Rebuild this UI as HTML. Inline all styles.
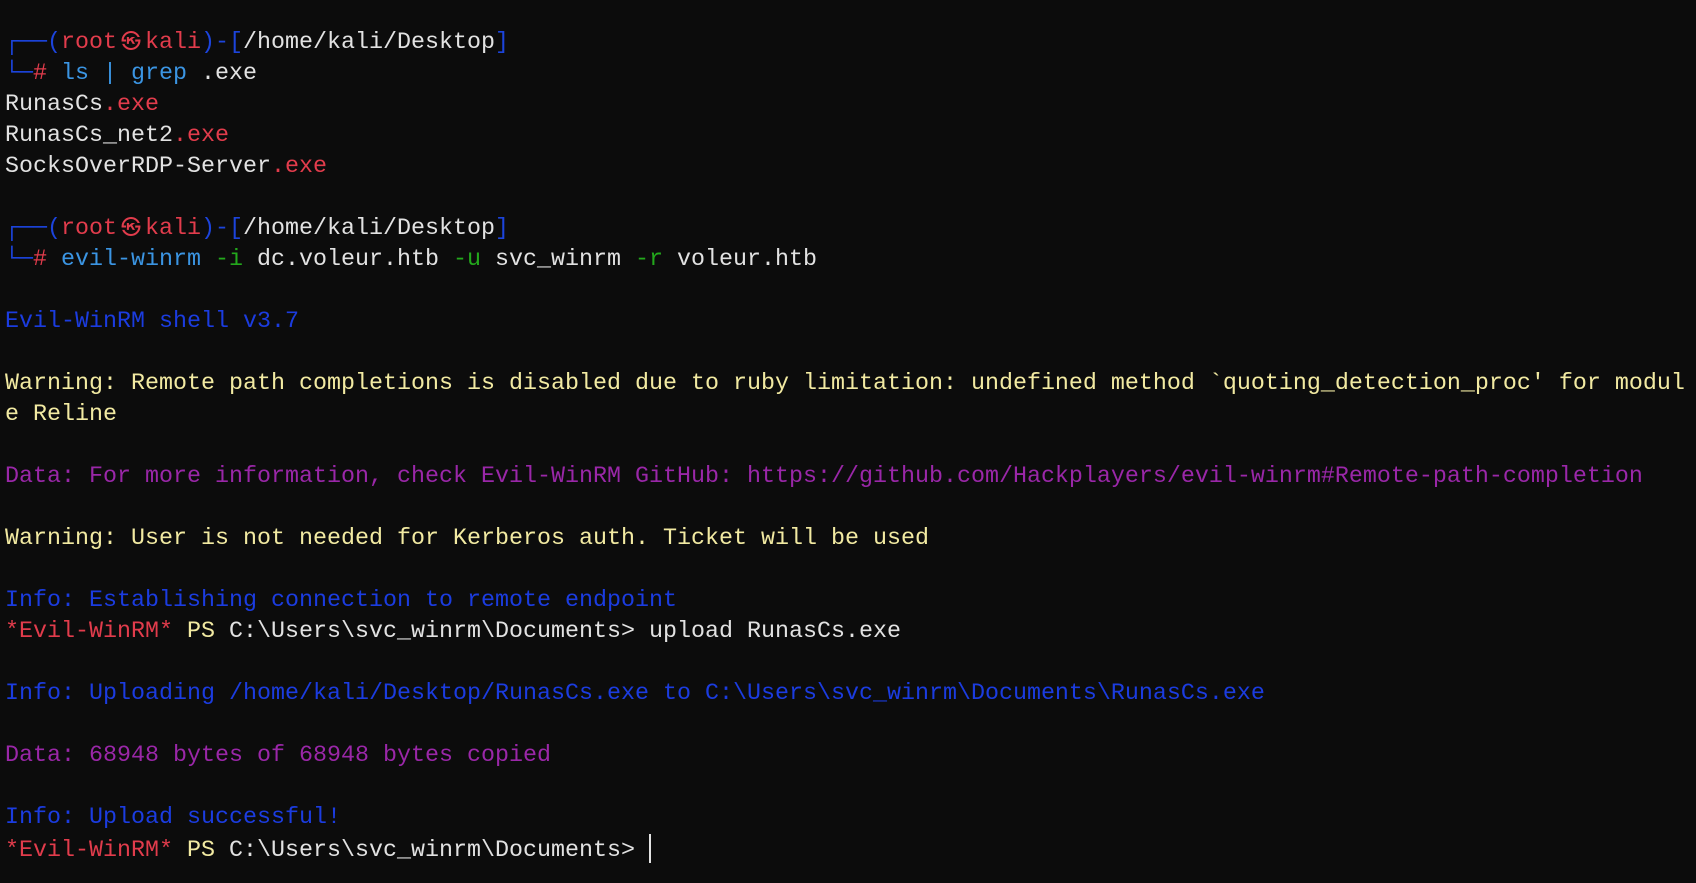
<!DOCTYPE html>
<html><head><meta charset="utf-8"><style>
html,body{margin:0;padding:0;background:#0c0c0c;width:1696px;height:883px;overflow:hidden}
#t{position:absolute;left:5px;top:28px;font-family:"Liberation Mono","DejaVu Sans Mono",monospace;font-size:23.33px;line-height:31px;color:#e2e2e2}
#t div{height:31px;white-space:pre;overflow:visible}
.b{color:#1c44dc}.r{color:#e23c4c}.c{color:#3b95e3}.g{color:#23a81c}.y{color:#f2eaa2}.p{color:#9a27a8}.i{color:#1b3ce0}
.k{display:inline-block;width:28px;text-align:center;font-family:"DejaVu Sans","Noto Sans CJK JP",sans-serif;font-size:20px;line-height:20px}
.cur{display:inline-block;width:2px;height:29px;background:#e2e2e2;vertical-align:-7px}
</style></head><body><div id="t"><div><span class="b">┌──(</span><span class="r">root<span class="k">㉿</span>kali</span><span class="b">)-[</span>/home/kali/Desktop<span class="b">]</span></div><div><span class="b">└─</span><span class="r">#</span> <span class="c">ls</span> <span class="c">|</span> <span class="c">grep</span> .exe</div><div>RunasCs<span class="r">.exe</span></div><div>RunasCs_net2<span class="r">.exe</span></div><div>SocksOverRDP-Server<span class="r">.exe</span></div><div></div><div><span class="b">┌──(</span><span class="r">root<span class="k">㉿</span>kali</span><span class="b">)-[</span>/home/kali/Desktop<span class="b">]</span></div><div><span class="b">└─</span><span class="r">#</span> <span class="c">evil-winrm</span> <span class="g">-i</span> dc.voleur.htb <span class="g">-u</span> svc_winrm <span class="g">-r</span> voleur.htb</div><div></div><div><span class="i">Evil-WinRM shell v3.7</span></div><div></div><div><span class="y">Warning: Remote path completions is disabled due to ruby limitation: undefined method `quoting_detection_proc' for modul</span></div><div><span class="y">e Reline</span></div><div></div><div><span class="p">Data: For more information, check Evil-WinRM GitHub: https://github.com/Hackplayers/evil-winrm#Remote-path-completion</span></div><div></div><div><span class="y">Warning: User is not needed for Kerberos auth. Ticket will be used</span></div><div></div><div><span class="i">Info: Establishing connection to remote endpoint</span></div><div><span class="r">*Evil-WinRM*</span> <span class="y">PS</span> C:\Users\svc_winrm\Documents&gt; upload RunasCs.exe</div><div></div><div><span class="i">Info: Uploading /home/kali/Desktop/RunasCs.exe to C:\Users\svc_winrm\Documents\RunasCs.exe</span></div><div></div><div><span class="p">Data: 68948 bytes of 68948 bytes copied</span></div><div></div><div><span class="i">Info: Upload successful!</span></div><div><span class="r">*Evil-WinRM*</span> <span class="y">PS</span> C:\Users\svc_winrm\Documents&gt; <span class="cur"></span></div></div></body></html>
